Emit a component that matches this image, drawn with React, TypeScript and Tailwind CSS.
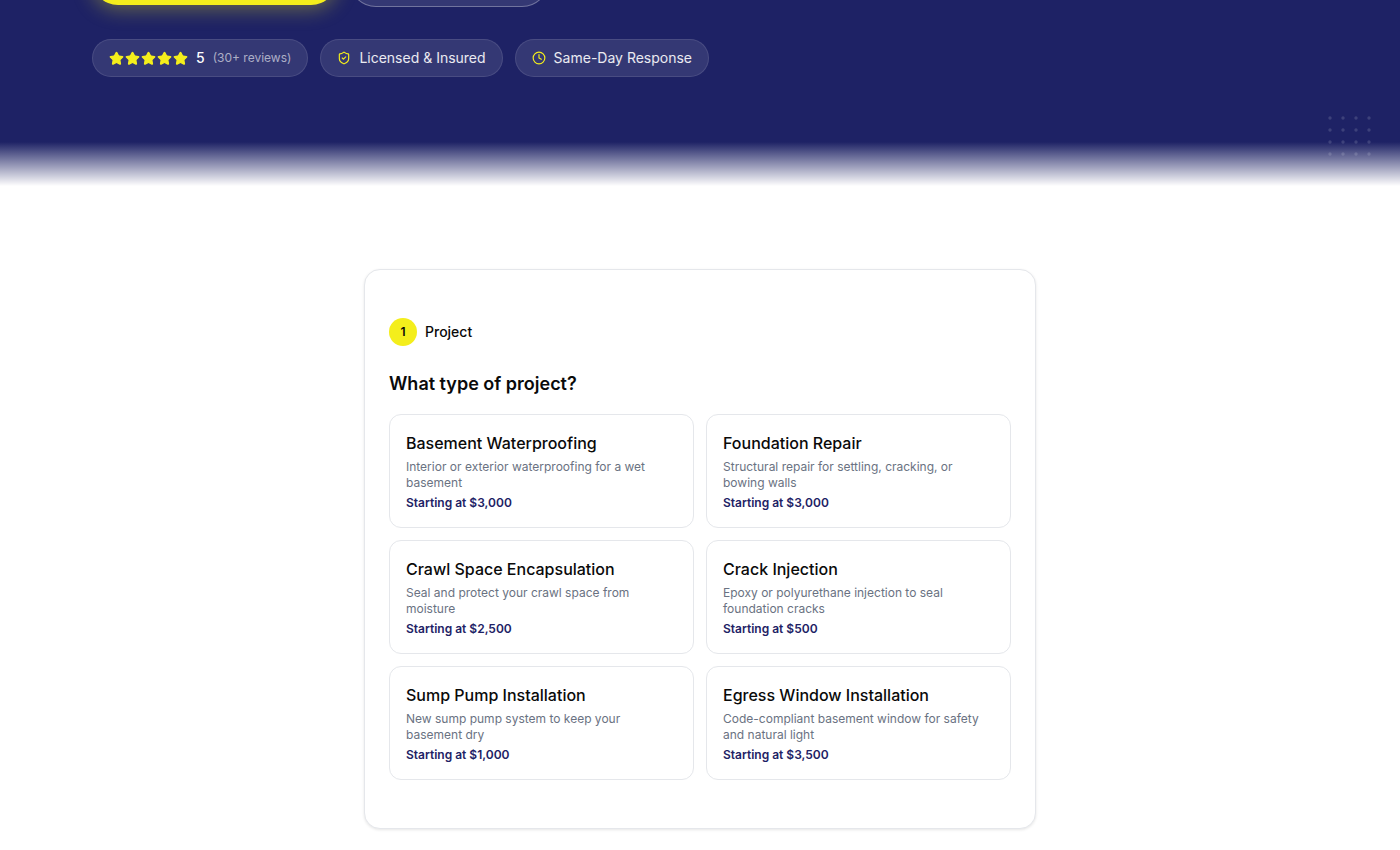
import { Clock, ShieldCheck, Star } from "lucide-react";

const projects = [
  { title: "Basement Waterproofing", text: "Interior or exterior waterproofing for a wet basement", price: "Starting at $3,000" },
  { title: "Foundation Repair", text: "Structural repair for settling, cracking, or bowing walls", price: "Starting at $3,000" },
  { title: "Crawl Space Encapsulation", text: "Seal and protect your crawl space from moisture", price: "Starting at $2,500" },
  { title: "Crack Injection", text: "Epoxy or polyurethane injection to seal foundation cracks", price: "Starting at $500" },
  { title: "Sump Pump Installation", text: "New sump pump system to keep your basement dry", price: "Starting at $1,000" },
  { title: "Egress Window Installation", text: "Code-compliant basement window for safety and natural light", price: "Starting at $3,500" },
];

function DotGrid() {
  const spots = [0, 1, 2, 3];
  return (
    <svg className="absolute right-[28px] top-[114px]" width="44" height="44" viewBox="0 0 44 44">
      {spots.map((row) =>
        spots.map((col) => (
          <circle key={`${row}-${col}`} cx={2 + col * 13} cy={4 + row * 12} r="1.7" fill="#ffffff" fillOpacity="0.14" />
        ))
      )}
    </svg>
  );
}

function Hero() {
  return (
    <section className="relative h-[186px] overflow-hidden bg-[#1e2265] px-[92px]">
      <div className="-mt-[47px] flex items-start gap-3">
        <div className="h-[52px] w-[245px] rounded-full bg-[#f4ee1c] shadow-[0_4px_20px_rgba(244,238,28,0.35)]" />
        <div className="h-[54px] w-[200px] rounded-full border border-white/30 bg-white/10" />
      </div>

      <div className="mt-[32px] flex items-center gap-3 text-sm text-white">
        <div className="flex h-[38px] items-center rounded-full border border-white/10 bg-white/10 pl-4 pr-4">
          <div className="flex gap-[1px]">
            {[1, 2, 3, 4, 5].map((n) => (
              <Star key={n} className="h-[15px] w-[15px] fill-[#f4ee1c] text-[#f4ee1c]" />
            ))}
          </div>
          <span className="ml-2 font-medium">5</span>
          <span className="ml-2 text-xs text-white/60">(30+ reviews)</span>
        </div>
        <div className="flex h-[38px] items-center gap-2 rounded-full border border-white/10 bg-white/10 px-4">
          <ShieldCheck className="h-[14px] w-[14px] text-[#f4ee1c]" />
          <span className="text-white/90">Licensed &amp; Insured</span>
        </div>
        <div className="flex h-[38px] items-center gap-2 rounded-full border border-white/10 bg-white/10 px-4">
          <Clock className="h-[14px] w-[14px] text-[#f4ee1c]" />
          <span className="text-white/90">Same-Day Response</span>
        </div>
      </div>

      <DotGrid />
      <div className="absolute inset-x-0 bottom-0 h-[44px] bg-gradient-to-b from-transparent to-white" />
    </section>
  );
}

export default function App() {
  return (
    <div className="h-[850px] overflow-hidden bg-white font-['Inter',sans-serif] text-[#0a0a0a]">
      <Hero />
      <main className="mx-auto mt-[83px] w-[672px] rounded-2xl border border-gray-200 bg-white px-6 pb-12 pt-12 shadow-[0_1px_3px_rgba(0,0,0,0.1)]">
        <div className="flex items-center gap-2">
          <span className="flex h-7 w-7 items-center justify-center rounded-full bg-[#f4ee1c] text-xs font-semibold">1</span>
          <span className="text-sm font-medium">Project</span>
        </div>
        <h2 className="mt-6 text-lg font-semibold leading-7">What type of project?</h2>
        <div className="mt-4 grid grid-cols-2 gap-3">
          {projects.map((p) => (
            <div key={p.title} className="h-[114px] rounded-xl border border-gray-200 bg-white p-4">
              <p className="text-base font-medium leading-6">{p.title}</p>
              <p className="mt-1 text-xs text-gray-500">{p.text}</p>
              <p className="mt-1 text-xs font-semibold text-[#1e2265]">{p.price}</p>
            </div>
          ))}
        </div>
      </main>
    </div>
  );
}
